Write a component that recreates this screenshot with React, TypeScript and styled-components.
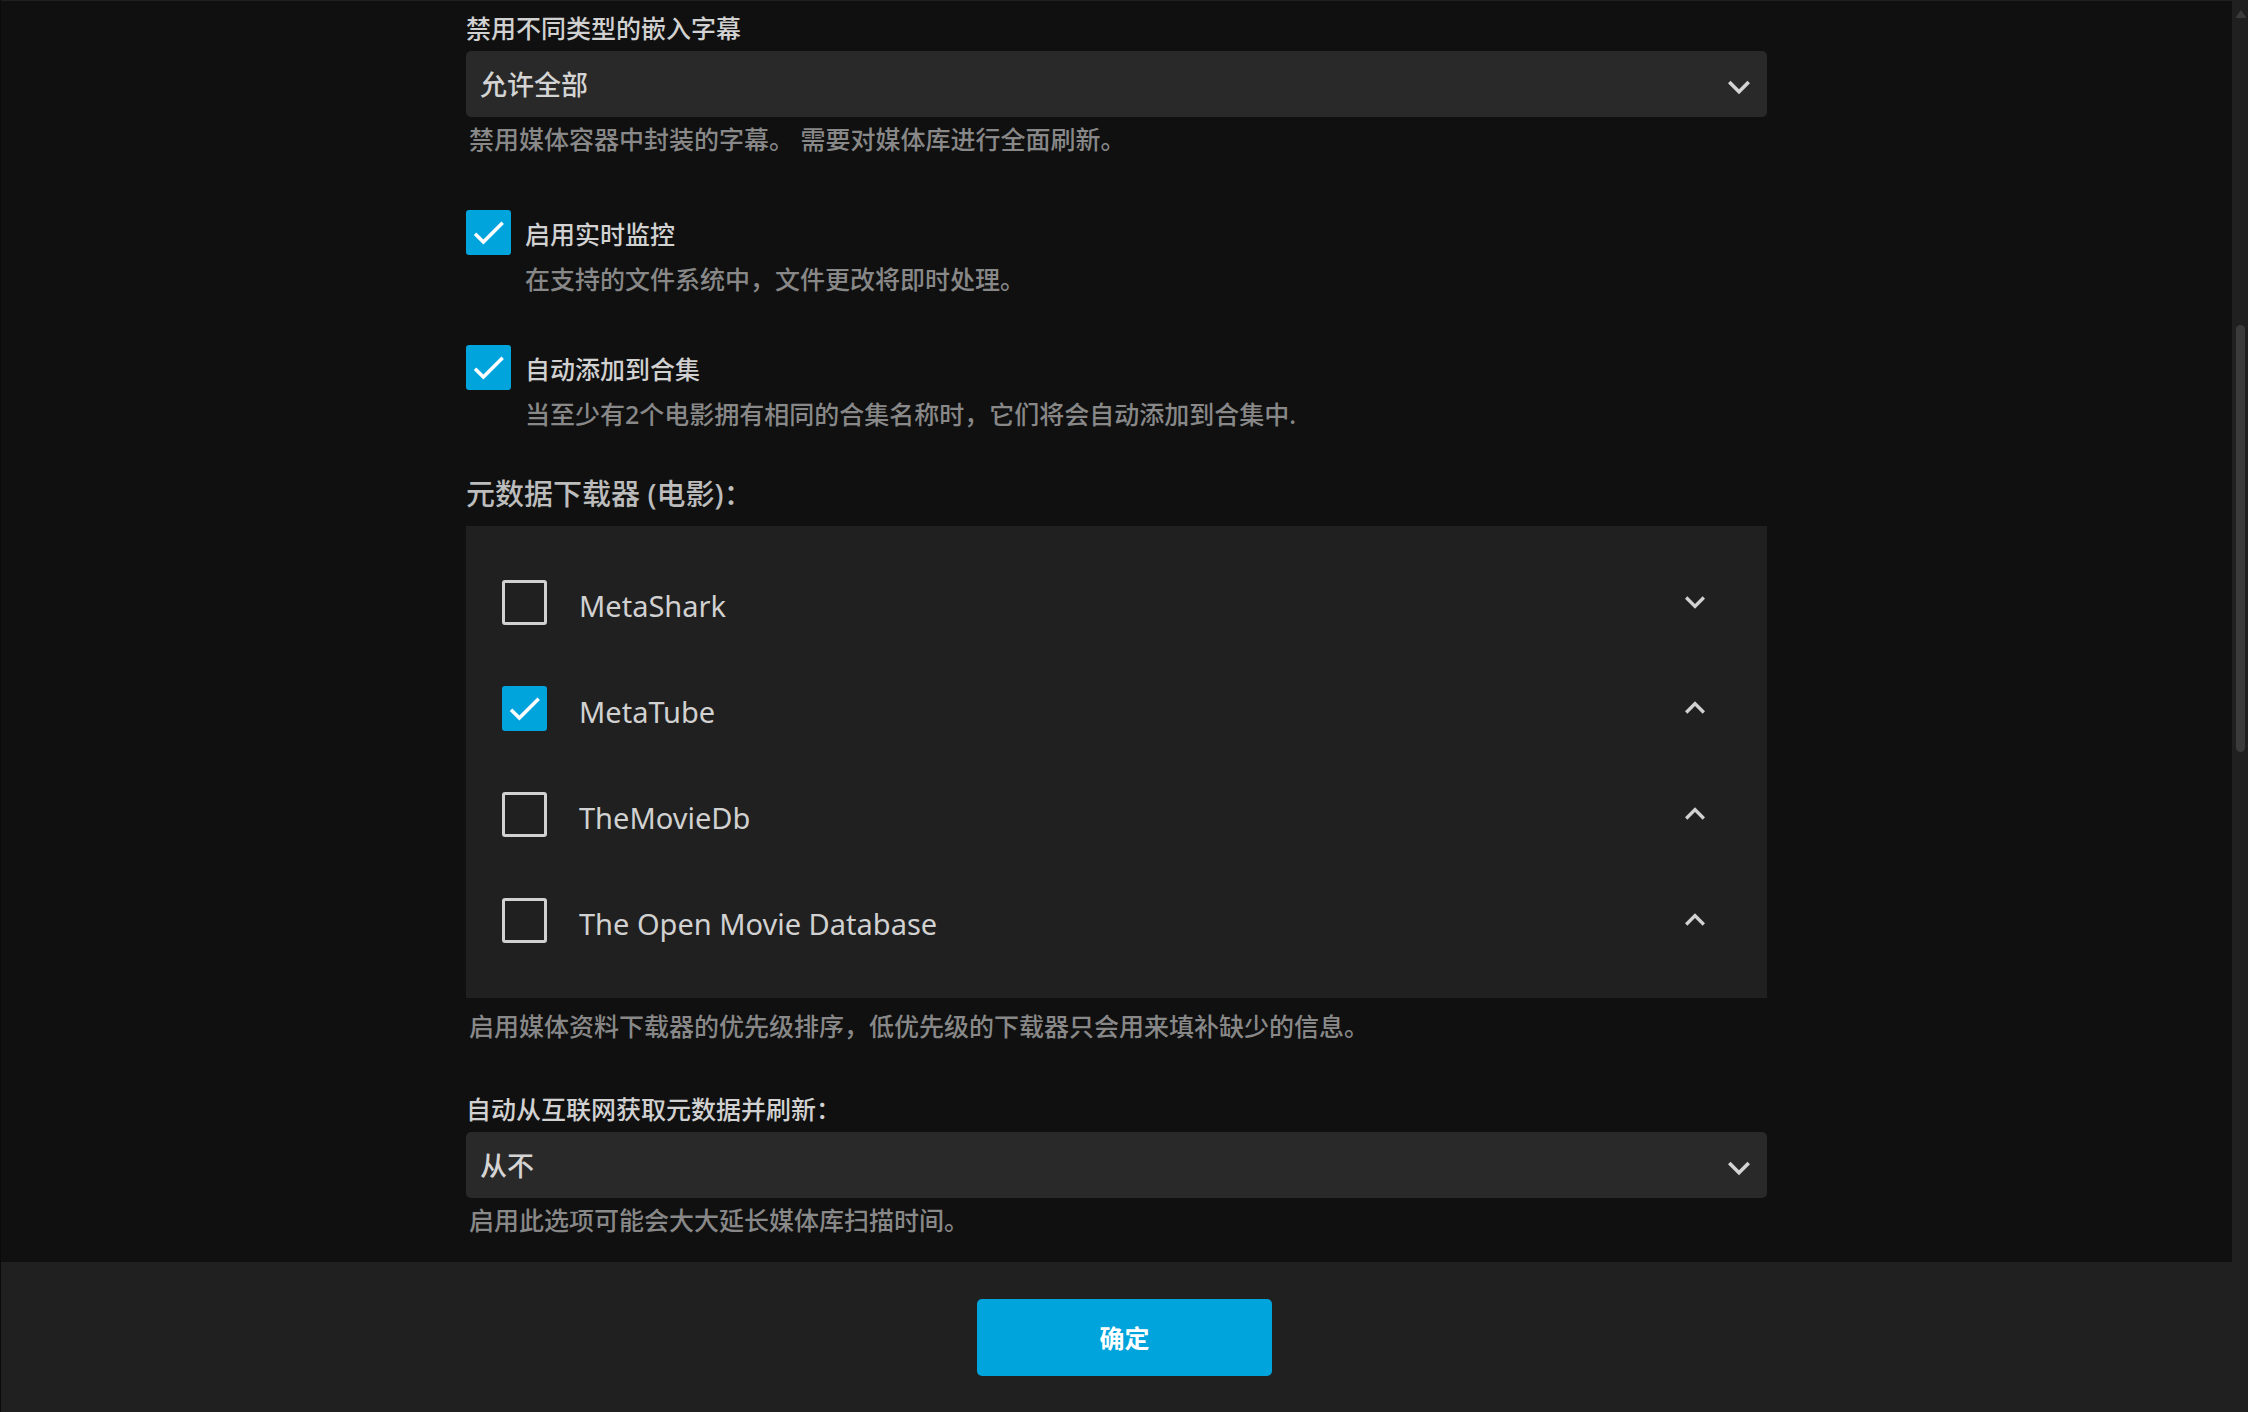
import React, { useState } from "react";
import styled, { createGlobalStyle } from "styled-components";

const GlobalStyle = createGlobalStyle`
  *, *::before, *::after { box-sizing: border-box; }
  body {
    margin: 0;
    background: #0b0b0b;
    color: #d1d1d1;
    font-family: "Noto Sans", "Noto Sans CJK SC", sans-serif;
    font-size: 25px;
    font-weight: 500;
    line-height: 34px;
  }
  h2, h3, p, ul { margin: 0; padding: 0; font-weight: inherit; }
  button, select, input { font-family: inherit; font-weight: inherit; margin: 0; }
`;

const Backdrop = styled.div`
  height: 100vh;
  padding-left: 1px;
  background: #0b0b0b;
`;

const Dialog = styled.form`
  display: flex;
  flex-direction: column;
  height: 100%;
  padding-top: 1px;
  background: #202020;
`;

const Body = styled.div`
  display: flex;
  flex: 1;
  min-height: 0;
`;

const Content = styled.main`
  flex: 1;
  min-width: 0;
  overflow: hidden;
  background: #101010;
`;

const Column = styled.div`
  width: 100%;
  max-width: 1301px;
  margin: 0 auto;
  padding-top: 10px;
`;

const ScrollTrack = styled.div`
  display: flex;
  flex-direction: column;
  align-items: flex-start;
  width: 16px;
  padding: 9px 0 0 4px;
  background: #202020;
`;

const ScrollArrow = styled.svg`
  display: block;
  width: 10px;
  height: 8px;
  fill: #3b3b3b;
`;

const ScrollThumb = styled.div`
  width: 9px;
  height: 427px;
  margin-top: 307px;
  border-radius: 5px;
  background: #3b3b3b;
`;

const Field = styled.div<{ $gap?: number }>`
  display: flex;
  flex-direction: column;
  margin-top: ${(p) => p.$gap ?? 0}px;
`;

const FieldLabel = styled.label`
  margin-bottom: 6px;
  color: #d1d1d1;
`;

const SelectBox = styled.div`
  position: relative;
  display: flex;
`;

const Select = styled.select`
  appearance: none;
  width: 100%;
  height: 66px;
  padding: 0 64px 0 14px;
  border: 0;
  border-radius: 5px;
  outline: none;
  background: #292929;
  color: #d4d4d4;
  font-size: 27px;
`;

const Help = styled.p<{ $gap?: number; $indent?: number }>`
  margin-top: ${(p) => p.$gap ?? 5}px;
  padding-left: ${(p) => p.$indent ?? 3}px;
  color: #888888;
`;

const Icon = styled.svg<{ $size: number }>`
  display: block;
  flex: none;
  width: ${(p) => p.$size}px;
  height: ${(p) => p.$size}px;
  fill: currentColor;
`;

const SelectArrow = styled(Icon)`
  position: absolute;
  top: 14px;
  right: 6px;
  color: #d4d4d4;
  pointer-events: none;
`;

const CheckLabel = styled.label<{ $gap: number }>`
  display: flex;
  align-items: center;
  gap: ${(p) => p.$gap}px;
  color: #d1d1d1;
`;

const CheckBox = styled.span`
  display: grid;
  flex: none;
  width: 45px;
  height: 45px;
`;

const CheckInput = styled.input`
  grid-area: 1 / 1;
  appearance: none;
  width: 45px;
  height: 45px;
  border: 3px solid #d1d1d1;
  border-radius: 3px;
  &:checked {
    border-color: #00a4dc;
    background: #00a4dc;
  }
`;

const CheckMark = styled(Icon)`
  grid-area: 1 / 1;
  place-self: center;
  color: #ffffff;
  pointer-events: none;
`;

const CheckText = styled.span`
  padding-top: 2px;
`;

const SectionTitle = styled.h2`
  margin: 43px 0 12px;
  color: #bcbcbc;
  font-size: 29px;
  line-height: 40px;
`;

const FetcherList = styled.ul`
  padding: 23px 36px 25px;
  list-style: none;
  background: #202020;
`;

const FetcherRow = styled.li`
  display: flex;
  align-items: center;
  justify-content: space-between;
  height: 106px;
`;

const FetcherName = styled.h3`
  padding-top: 8px;
  font-size: 29px;
  font-weight: 400;
  line-height: 40px;
`;

const MoveButton = styled.button`
  display: grid;
  place-items: center;
  width: 72px;
  height: 72px;
  padding: 0;
  border: 0;
  background: transparent;
  color: #d1d1d1;
`;

const Footer = styled.footer`
  display: flex;
  justify-content: center;
  padding: 37px 0 36px;
  background: #202020;
`;

const SubmitButton = styled.button`
  width: 295px;
  height: 77px;
  padding: 0 0 2px;
  border: 0;
  border-radius: 5px;
  background: #00a4dc;
  color: #ffffff;
  font-size: 25px;
  font-weight: 700;
`;

const DOWN = "M7.41 8.59L12 13.17l4.59-4.58L18 10l-6 6-6-6 1.41-1.41z";
const UP = "M7.41 15.41L12 10.83l4.59 4.58L18 14l-6-6-6 6z";
const CHECK = "M9 16.17L4.83 12l-1.42 1.41L9 19 21 7l-1.41-1.41z";

function Check({ checked, onChange }: { checked: boolean; onChange: () => void }) {
  return (
    <CheckBox>
      <CheckInput type="checkbox" checked={checked} onChange={onChange} />
      {checked && (
        <CheckMark $size={41} viewBox="0 0 24 24" aria-hidden="true">
          <path d={CHECK} />
        </CheckMark>
      )}
    </CheckBox>
  );
}

function SelectField(props: { id: string; label: string; options: string[]; help: string; gap?: number }) {
  return (
    <Field $gap={props.gap}>
      <FieldLabel htmlFor={props.id}>{props.label}</FieldLabel>
      <SelectBox>
        <Select id={props.id}>
          {props.options.map((o) => (
            <option key={o}>{o}</option>
          ))}
        </Select>
        <SelectArrow $size={44} viewBox="0 0 24 24" aria-hidden="true">
          <path d={DOWN} />
        </SelectArrow>
      </SelectBox>
      <Help>{props.help}</Help>
    </Field>
  );
}

function CheckField(props: { label: string; help: string; gap: number }) {
  const [on, setOn] = useState(true);
  return (
    <Field $gap={props.gap}>
      <CheckLabel $gap={14}>
        <Check checked={on} onChange={() => setOn(!on)} />
        <CheckText>{props.label}</CheckText>
      </CheckLabel>
      <Help $gap={7} $indent={59}>
        {props.help}
      </Help>
    </Field>
  );
}

function Fetcher({ name, enabled, first }: { name: string; enabled: boolean; first: boolean }) {
  const [on, setOn] = useState(enabled);
  return (
    <FetcherRow>
      <CheckLabel $gap={32}>
        <Check checked={on} onChange={() => setOn(!on)} />
        <FetcherName>{name}</FetcherName>
      </CheckLabel>
      <MoveButton type="button" aria-label={first ? "下移" : "上移"}>
        <Icon $size={40} viewBox="0 0 24 24" aria-hidden="true">
          <path d={first ? DOWN : UP} />
        </Icon>
      </MoveButton>
    </FetcherRow>
  );
}

const FETCHERS = [
  { name: "MetaShark", enabled: false },
  { name: "MetaTube", enabled: true },
  { name: "TheMovieDb", enabled: false },
  { name: "The Open Movie Database", enabled: false },
];

export default function App() {
  return (
    <>
      <GlobalStyle />
      <Backdrop>
        <Dialog onSubmit={(e) => e.preventDefault()}>
          <Body>
            <Content>
              <Column>
                <SelectField
                  id="embedded-subtitles"
                  label="禁用不同类型的嵌入字幕"
                  options={["允许全部"]}
                  help="禁用媒体容器中封装的字幕。 需要对媒体库进行全面刷新。"
                />
                <CheckField gap={54} label="启用实时监控" help="在支持的文件系统中，文件更改将即时处理。" />
                <CheckField
                  gap={49}
                  label="自动添加到合集"
                  help="当至少有2个电影拥有相同的合集名称时，它们将会自动添加到合集中."
                />
                <SectionTitle>元数据下载器 (电影)：</SectionTitle>
                <FetcherList>
                  {FETCHERS.map((f, i) => (
                    <Fetcher key={f.name} name={f.name} enabled={f.enabled} first={i === 0} />
                  ))}
                </FetcherList>
                <Help $gap={11}>启用媒体资料下载器的优先级排序，低优先级的下载器只会用来填补缺少的信息。</Help>
                <SelectField
                  id="refresh-interval"
                  gap={49}
                  label="自动从互联网获取元数据并刷新："
                  options={["从不"]}
                  help="启用此选项可能会大大延长媒体库扫描时间。"
                />
              </Column>
            </Content>
            <ScrollTrack aria-hidden="true">
              <ScrollArrow viewBox="0 0 10 8">
                <path d="M5 0 L10 7 Q10 8 9 8 H1 Q0 8 0 7 Z" />
              </ScrollArrow>
              <ScrollThumb />
            </ScrollTrack>
          </Body>
          <Footer>
            <SubmitButton type="submit">确定</SubmitButton>
          </Footer>
        </Dialog>
      </Backdrop>
    </>
  );
}
